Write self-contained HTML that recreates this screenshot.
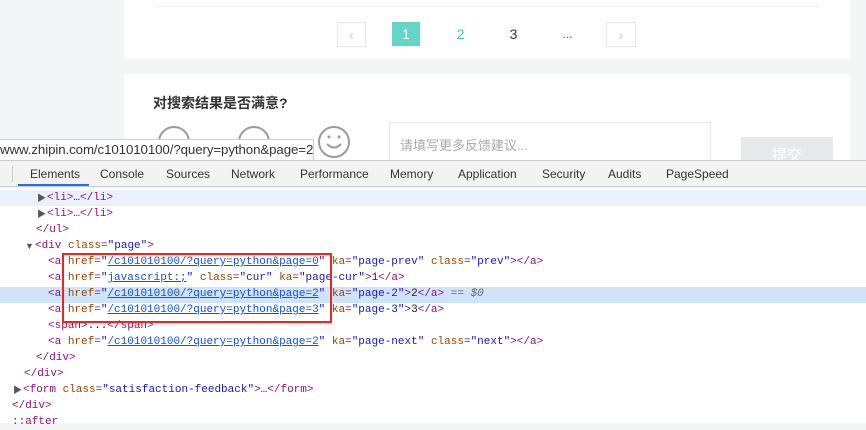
<!DOCTYPE html>
<html><head><meta charset="utf-8"><style>
*{margin:0;padding:0;box-sizing:border-box}
body{width:866px;height:423px;overflow:hidden;background:#f4f5f7;position:relative;font-family:"Liberation Sans","Noto Sans CJK SC",sans-serif}
.a{position:absolute}
.card{background:#fff}
.pg{position:absolute;top:22px;height:25px;width:29px;font-size:14px;text-align:center;line-height:25px}
.code{position:absolute;height:16px;font-family:"Liberation Mono",monospace;font-size:11px;line-height:16px;white-space:pre;color:#881280}
.tri{position:absolute;font-size:9px;color:#555;line-height:16px;height:16px}
.t{color:#881280}.n{color:#994500}.v{color:#1a1aa6}.l{color:#1155cc;text-decoration:underline}.k{color:#222}
.tab{position:absolute;top:160px;height:27px;line-height:28px;font-size:12px;color:#333}
</style></head><body>
<div class="a card" style="left:124px;top:0;width:726px;height:59px"></div>
<div class="a" style="left:155px;top:6px;width:665px;height:1px;background:#eceef1"></div>
<div class="pg" style="left:337px;border:1px solid #e3e5e8;color:#ccc">&lsaquo;</div>
<div class="pg" style="left:392px;width:28px;height:24px;background:#63d6c9;color:#fff">1</div>
<div class="pg" style="left:446px;color:#3dc9bd">2</div>
<div class="pg" style="left:499px;color:#333">3</div>
<div class="pg" style="left:553px;color:#555;font-size:12px">...</div>
<div class="pg" style="left:606px;width:30px;border:1px solid #e3e5e8;color:#ccc">&rsaquo;</div>

<div class="a card" style="left:124px;top:74px;width:726px;height:90px"></div>
<div class="a" style="left:153px;top:93px;font-size:14px;font-weight:bold;color:#333">对搜索结果是否满意?</div>
<svg class="a" style="left:156px;top:124px" width="200" height="40">
<g fill="none" stroke="#9a9ca3" stroke-width="2">
<circle cx="18" cy="18" r="15"/><circle cx="98" cy="18" r="15"/><circle cx="178" cy="18" r="15"/>
<path d="M171 20q7 7 14 0"/></g>
<g fill="#9a9ca3"><circle cx="173" cy="13" r="1.5"/><circle cx="183" cy="13" r="1.5"/></g>
</svg>
<div class="a" style="left:389px;top:122px;width:322px;height:50px;border:1px solid #e3e5e8;background:#fff"></div>
<div class="a" style="left:400px;top:135px;font-size:13px;color:#aaa">请填写更多反馈建议...</div>
<div class="a" style="left:741px;top:137px;width:92px;height:30px;background:#e8e9eb;color:#fff;font-size:15px;text-align:center;line-height:38px">提交</div>

<div class="a" style="left:0;top:139px;width:314px;height:22px;background:#fff;border:1px solid #cfcfcf;border-left:none;font-size:13.3px;color:#333;line-height:20px;white-space:nowrap;overflow:hidden;letter-spacing:-0.1px">www.zhipin.com/c101010100/?query=python&amp;page=2</div>

<div class="a" style="left:0;top:160px;width:866px;height:27px;background:#f3f3f3;border-top:1px solid #cbcbcb;border-bottom:1px solid #cbcbcb"></div>
<div class="a" style="left:12px;top:166px;width:1px;height:16px;background:#ccc"></div>
<div class="a" style="left:18px;top:184px;width:71px;height:2px;background:#1a73e8"></div>
<div class="tab" style="left:30px">Elements</div>
<div class="tab" style="left:100px">Console</div>
<div class="tab" style="left:166px">Sources</div>
<div class="tab" style="left:231px">Network</div>
<div class="tab" style="left:300px">Performance</div>
<div class="tab" style="left:390px">Memory</div>
<div class="tab" style="left:458px">Application</div>
<div class="tab" style="left:542px">Security</div>
<div class="tab" style="left:608px">Audits</div>
<div class="tab" style="left:666px">PageSpeed</div>

<div class="a" style="left:0;top:188px;width:866px;height:235px;background:#fff"></div>
<div class="a" style="left:0;top:190px;width:866px;height:16px;background:#eaf1fb"></div>
<div class="a" style="left:0;top:287px;width:866px;height:16px;background:#cfe3f9"></div>

<div class="tri" style="left:37px;top:190px">▶</div>
<div class="code" style="left:47px;top:190px">&lt;li&gt;<span class="k">…</span>&lt;/li&gt;</div>
<div class="tri" style="left:37px;top:206px">▶</div>
<div class="code" style="left:47px;top:206px">&lt;li&gt;<span class="k">…</span>&lt;/li&gt;</div>
<div class="code" style="left:36px;top:222px">&lt;/ul&gt;</div>
<div class="tri" style="left:25px;top:238px">▼</div>
<div class="code" style="left:35px;top:238px">&lt;div <span class="n">class</span>=<span class="v">"page"</span>&gt;</div>
<div class="code" style="left:48px;top:254px">&lt;a <span class="n">href</span>=<span class="v">"</span><span class="l">/c101010100/?query=python&amp;page=0</span><span class="v">"</span> <span class="n">ka</span>=<span class="v">"page-prev"</span> <span class="n">class</span>=<span class="v">"prev"</span>&gt;&lt;/a&gt;</div>
<div class="code" style="left:48px;top:270px">&lt;a <span class="n">href</span>=<span class="v">"</span><span class="l">javascript:;</span><span class="v">"</span> <span class="n">class</span>=<span class="v">"cur"</span> <span class="n">ka</span>=<span class="v">"page-cur"</span>&gt;<span class="k">1</span>&lt;/a&gt;</div>
<div class="code" style="left:48px;top:286px">&lt;a <span class="n">href</span>=<span class="v">"</span><span class="l">/c101010100/?query=python&amp;page=2</span><span class="v">"</span> <span class="n">ka</span>=<span class="v">"page-2"</span>&gt;<span class="k">2</span>&lt;/a&gt; <span style="color:#666">== <i>$0</i></span></div>
<div class="code" style="left:48px;top:302px">&lt;a <span class="n">href</span>=<span class="v">"</span><span class="l">/c101010100/?query=python&amp;page=3</span><span class="v">"</span> <span class="n">ka</span>=<span class="v">"page-3"</span>&gt;<span class="k">3</span>&lt;/a&gt;</div>
<div class="code" style="left:48px;top:318px">&lt;span&gt;<span class="k">...</span>&lt;/span&gt;</div>
<div class="code" style="left:48px;top:334px">&lt;a <span class="n">href</span>=<span class="v">"</span><span class="l">/c101010100/?query=python&amp;page=2</span><span class="v">"</span> <span class="n">ka</span>=<span class="v">"page-next"</span> <span class="n">class</span>=<span class="v">"next"</span>&gt;&lt;/a&gt;</div>
<div class="code" style="left:36px;top:350px">&lt;/div&gt;</div>
<div class="code" style="left:24px;top:366px">&lt;/div&gt;</div>
<div class="tri" style="left:13px;top:382px">▶</div>
<div class="code" style="left:23px;top:382px">&lt;form <span class="n">class</span>=<span class="v">"satisfaction-feedback"</span>&gt;<span class="k">…</span>&lt;/form&gt;</div>
<div class="code" style="left:12px;top:398px">&lt;/div&gt;</div>
<div class="code" style="left:12px;top:414px"><span class="t">::after</span></div>

<div class="a" style="left:62px;top:253px;width:270px;height:70px;border:2px solid #f2231b"></div>
</body></html>
